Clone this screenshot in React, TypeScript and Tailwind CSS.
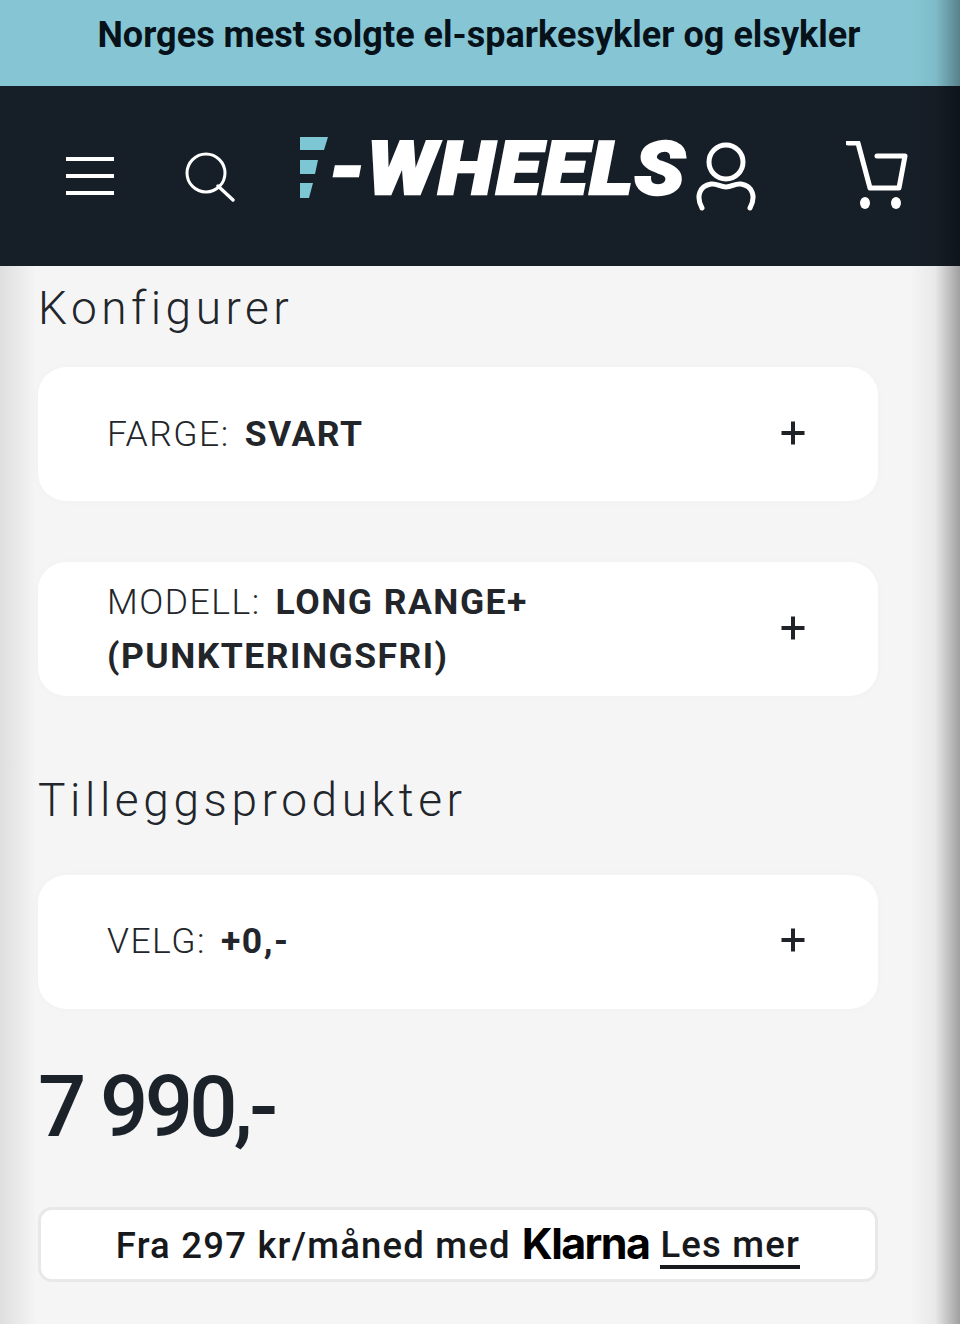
import React from "react";

const Plus = () => (
  <svg width="26" height="26" viewBox="0 0 26 26" className="mb-[2px] shrink-0">
    <path d="M13 1.5V24.5M1.5 13H24.5" stroke="#1f2226" strokeWidth="4" />
  </svg>
);

function Card({ label, value, cls = "" }: { label: string; value: string; cls?: string }) {
  return (
    <div className={`flex h-[134px] w-[840px] items-center justify-between rounded-[28px] bg-white pl-[69px] pr-[72px] shadow-[0_0_10px_rgba(0,0,0,0.025)] ${cls}`}>
      <div className="w-[560px] text-[35.5px] leading-[54px] tracking-[1.5px] text-[#22252a]">
        <span className="font-light">{label}</span>
        <span className="ml-[15px] font-bold">{value}</span>
      </div>
      <Plus />
    </div>
  );
}

export default function App() {
  return (
    <div className="relative h-[1324px] w-[960px] overflow-hidden bg-[#f5f5f6] font-['Roboto',sans-serif]">
      <div className="flex h-[86px] items-center justify-center bg-[#86c6d4] pb-[16px] pr-[2px] text-[36px] font-bold text-[#07111a]">
        <span className="tracking-[0.02px]">Norges mest solgte el-sparkesykler og elsykler</span>
      </div>
      <header className="flex h-[180px] items-start bg-[#161e27]">
        <svg width="48" height="38" viewBox="0 0 48 38" className="ml-[66px] mt-[71px] shrink-0">
          <path d="M0 2H48M0 19H48M0 36H48" stroke="#fff" strokeWidth="4" />
        </svg>
        <svg width="50" height="50" viewBox="0 0 50 50" className="ml-[71px] mt-[66px] shrink-0">
          <circle cx="21" cy="21" r="19" fill="none" stroke="#fff" strokeWidth="3" />
          <path d="M33 34L48 48" stroke="#fff" strokeWidth="3.4" strokeLinecap="round" />
        </svg>
        <svg width="30" height="64" viewBox="0 0 30 64" className="ml-[64px] mt-[50px] shrink-0">
          <path d="M1 1H29L25 14H1ZM1 24H19L16 38H1ZM1 47H14L10 62H1Z" fill="#7cc7d3" />
        </svg>
        <div className="mt-[40px] w-[354px] shrink-0 origin-left scale-x-[1.13] whitespace-nowrap text-[73px] leading-[86px] font-black italic tracking-[1.6px] text-white [-webkit-text-stroke:2.4px_#fff]">
          -WHEELS
        </div>
        <svg width="60" height="72" viewBox="0 0 60 72" className="ml-[13px] mt-[55px] shrink-0">
          <circle cx="30" cy="21" r="17" fill="none" stroke="#fff" strokeWidth="5" />
          <path d="M6 67C0 56 3 45 15 43C21 42 24 46 30 46C36 46 39 42 45 43C57 45 60 56 54 67" fill="none" stroke="#fff" strokeWidth="5" strokeLinecap="round" />
        </svg>
        <svg width="62" height="72" viewBox="0 0 62 72" className="ml-[90px] mt-[55px] shrink-0">
          <path d="M2 2H12L24 47H53L59 15H31" fill="none" stroke="#fff" strokeWidth="5" strokeLinecap="round" strokeLinejoin="round" />
          <ellipse cx="19" cy="62" rx="5" ry="6" fill="#fff" />
          <ellipse cx="50" cy="62" rx="5" ry="6" fill="#fff" />
        </svg>
      </header>
      <main className="flex flex-col items-start pl-[38px]">
        <h2 className="mt-[12px] text-[46px] leading-[60px] font-light tracking-[4.5px] text-[#22252a]">Konfigurer</h2>
        <Card cls="mt-[29px]" label="FARGE:" value="SVART" />
        <Card cls="mt-[61px]" label="MODELL:" value="LONG RANGE+ (PUNKTERINGSFRI)" />
        <h2 className="mt-[74px] text-[46px] leading-[60px] font-light tracking-[4.6px] text-[#22252a]">Tilleggsprodukter</h2>
        <Card cls="mt-[45px] pb-[2px]" label="VELG:" value="+0,-" />
        <div className="mt-[45px] text-[85px] leading-[106px] font-medium tracking-[-3.7px] text-[#1c2229]">7 990,-</div>
        <div className="mt-[47px] flex h-[75px] w-[840px] items-center justify-center rounded-[14px] border-[3px] border-[#e8e8e9] bg-white text-[36.5px] font-medium tracking-[1.2px] text-[#17191c]">
          <span className="pt-[4px]">Fra 297 kr/måned med</span>
          <span className="ml-[11px] pb-[2px] font-['Inter',sans-serif] text-[43px] font-bold tracking-[-1.6px] text-black">Klarna</span>
          <span className="ml-[11px] mt-[4px] border-b-[4px] border-[#17191c] leading-[41px]">Les mer</span>
        </div>
      </main>
      <div className="pointer-events-none absolute bottom-0 left-0 top-[266px] w-[36px] bg-gradient-to-r from-[#dedede] to-transparent" />
      <div className="pointer-events-none absolute bottom-0 right-0 top-0 w-[50px] bg-gradient-to-r from-transparent via-black/5 to-black/35" />
    </div>
  );
}
